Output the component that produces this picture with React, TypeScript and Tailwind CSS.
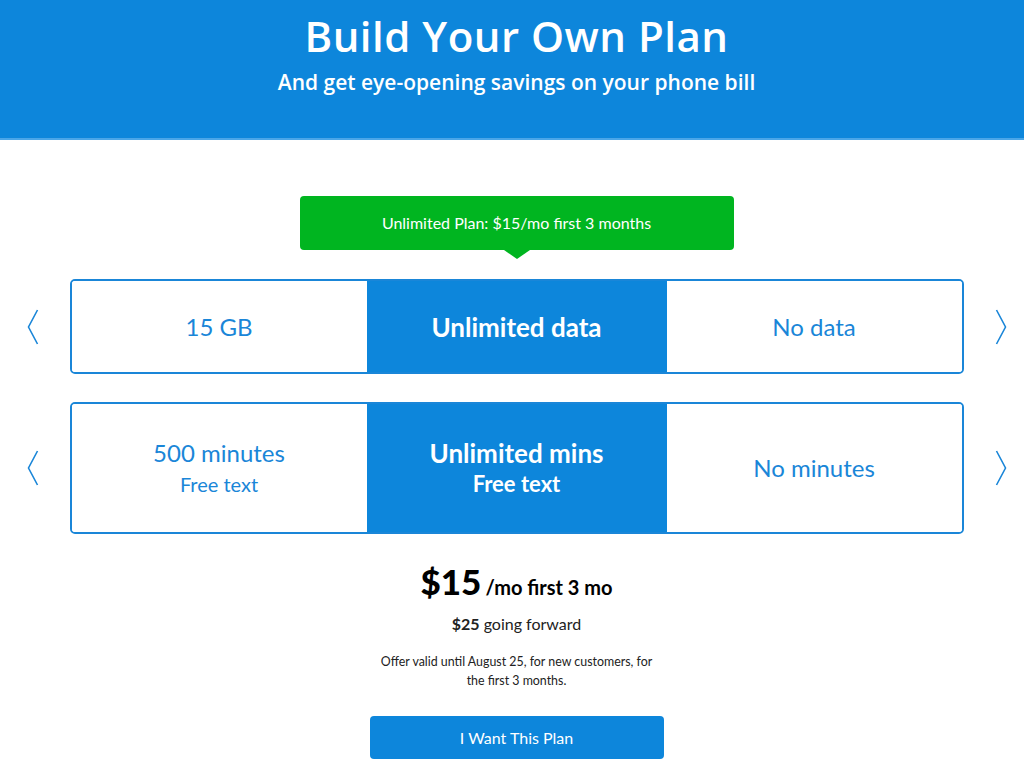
import { useState } from 'react';

const dataOptions = [{ title: '15 GB' }, { title: 'Unlimited data' }, { title: 'No data' }];
const minuteOptions = [
  { title: '500 minutes', sub: 'Free text' },
  { title: 'Unlimited mins', sub: 'Free text' },
  { title: 'No minutes' },
];

function Chevron({ dir }: { dir: 'left' | 'right' }) {
  return (
    <button type="button" className="flex h-10 w-10 items-center justify-center text-[#1a86d8]">
      <svg width="12" height="36" viewBox="0 0 12 36" fill="none" aria-hidden>
        {dir === 'left' ? (
          <path d="M10.5 1L1.5 18L10.5 35" stroke="currentColor" strokeWidth="1.6" />
        ) : (
          <path d="M1.5 1L10.5 18L1.5 35" stroke="currentColor" strokeWidth="1.6" />
        )}
      </svg>
    </button>
  );
}

function OptionRow({
  options,
  selected,
  onSelect,
  height,
}: {
  options: { title: string; sub?: string }[];
  selected: number;
  onSelect: (i: number) => void;
  height: string;
}) {
  return (
    <div className="flex items-center justify-center gap-[17px]">
      <Chevron dir="left" />
      <div
        className={`grid w-[894px] grid-cols-[295fr_300fr_295fr] overflow-hidden rounded-[5px] border-2 border-[#1a86d8] ${height}`}
      >
        {options.map((opt, i) => {
          const active = i === selected;
          return (
            <button
              key={opt.title}
              type="button"
              onClick={() => onSelect(i)}
              className={`flex flex-col items-center justify-center ${
                active ? 'bg-[#0d86db] font-bold text-white' : 'bg-white text-[#1a86d8]'
              }`}
            >
              <span className={`${active ? 'text-[26px]' : 'text-[24px]'} leading-[32px]`}>{opt.title}</span>
              {opt.sub && (
                <span className={`${active ? 'text-[22px]' : 'text-[20px]'} leading-[30px]`}>{opt.sub}</span>
              )}
            </button>
          );
        })}
      </div>
      <Chevron dir="right" />
    </div>
  );
}

export default function App() {
  const [data, setData] = useState(1);
  const [mins, setMins] = useState(1);

  return (
    <div className="min-h-[765px] bg-white pl-[9px] font-['Lato','Noto_Sans',sans-serif]">
      {/* Hero */}
      <header className="-ml-[9px] flex h-[140px] flex-col items-center border-b-2 border-[#4aa6e8] bg-[#0d86db] pl-[9px] pt-[8px] text-white">
        <h1 className="font-['Open_Sans',sans-serif] text-[42px] font-semibold leading-[56px] tracking-[0.5px]">
          Build Your Own Plan
        </h1>
        <p className="mt-[4px] font-['Open_Sans',sans-serif] text-[21px] font-semibold leading-[28px]">
          And get eye-opening savings on your phone bill
        </p>
      </header>

      <main className="flex flex-col items-center pt-[56px]">
        {/* Plan banner */}
        <div className="relative flex h-[54px] w-[434px] items-center justify-center rounded-[4px] bg-[#00b520] text-[16px] text-white">
          Unlimited Plan: $15/mo first 3 months
          <span className="absolute left-1/2 top-full -translate-x-1/2 border-x-[13px] border-t-[9px] border-x-transparent border-t-[#00b520]" />
        </div>

        <div className="mt-[29px] flex w-full flex-col gap-[28px]">
          <OptionRow options={dataOptions} selected={data} onSelect={setData} height="h-[95px]" />
          <OptionRow options={minuteOptions} selected={mins} onSelect={setMins} height="h-[132px]" />
        </div>

        {/* Price */}
        <div className="mt-[25px] flex items-baseline gap-[4px] text-black">
          <span className="text-[35px] font-black leading-[44px]">$15</span>
          <span className="text-[20px] font-bold">/mo first 3 mo</span>
        </div>
        <p className="mt-[9px] text-[16px] text-[#222]">
          <span className="font-bold">$25</span> going forward
        </p>
        <p className="mt-[16px] w-[280px] text-center text-[12.4px] leading-[19px] text-[#222]">
          Offer valid until August 25, for new customers, for the first 3 months.
        </p>

        <button
          type="button"
          className="mt-[26px] h-[43px] w-[294px] rounded-[4px] bg-[#0d86db] text-[16px] text-white"
        >
          I Want This Plan
        </button>
      </main>
    </div>
  );
}
